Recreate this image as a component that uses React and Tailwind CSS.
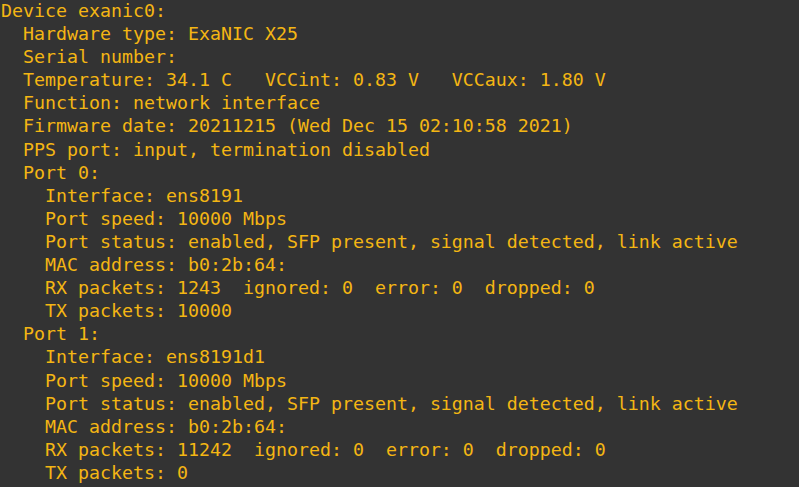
const lines = [
  "Device exanic0:",
  "  Hardware type: ExaNIC X25",
  "  Serial number:",
  "  Temperature: 34.1 C   VCCint: 0.83 V   VCCaux: 1.80 V",
  "  Function: network interface",
  "  Firmware date: 20211215 (Wed Dec 15 02:10:58 2021)",
  "  PPS port: input, termination disabled",
  "  Port 0:",
  "    Interface: ens8191",
  "    Port speed: 10000 Mbps",
  "    Port status: enabled, SFP present, signal detected, link active",
  "    MAC address: b0:2b:64:",
  "    RX packets: 1243  ignored: 0  error: 0  dropped: 0",
  "    TX packets: 10000",
  "  Port 1:",
  "    Interface: ens8191d1",
  "    Port speed: 10000 Mbps",
  "    Port status: enabled, SFP present, signal detected, link active",
  "    MAC address: b0:2b:64:",
  "    RX packets: 11242  ignored: 0  error: 0  dropped: 0",
  "    TX packets: 0",
  " d   l",
];

export default function App() {
  return (
    <div className="w-[799px] h-[487px] overflow-hidden bg-[#333333]">
      <pre className="pl-[1px] -mt-px m-0 font-['DejaVu_Sans_Mono',monospace] text-[18.27px] leading-[23.1px] text-[#f4b613] whitespace-pre">
        {lines.map((line, i) => (
          <div key={i}>{line || " "}</div>
        ))}
      </pre>
    </div>
  );
}
